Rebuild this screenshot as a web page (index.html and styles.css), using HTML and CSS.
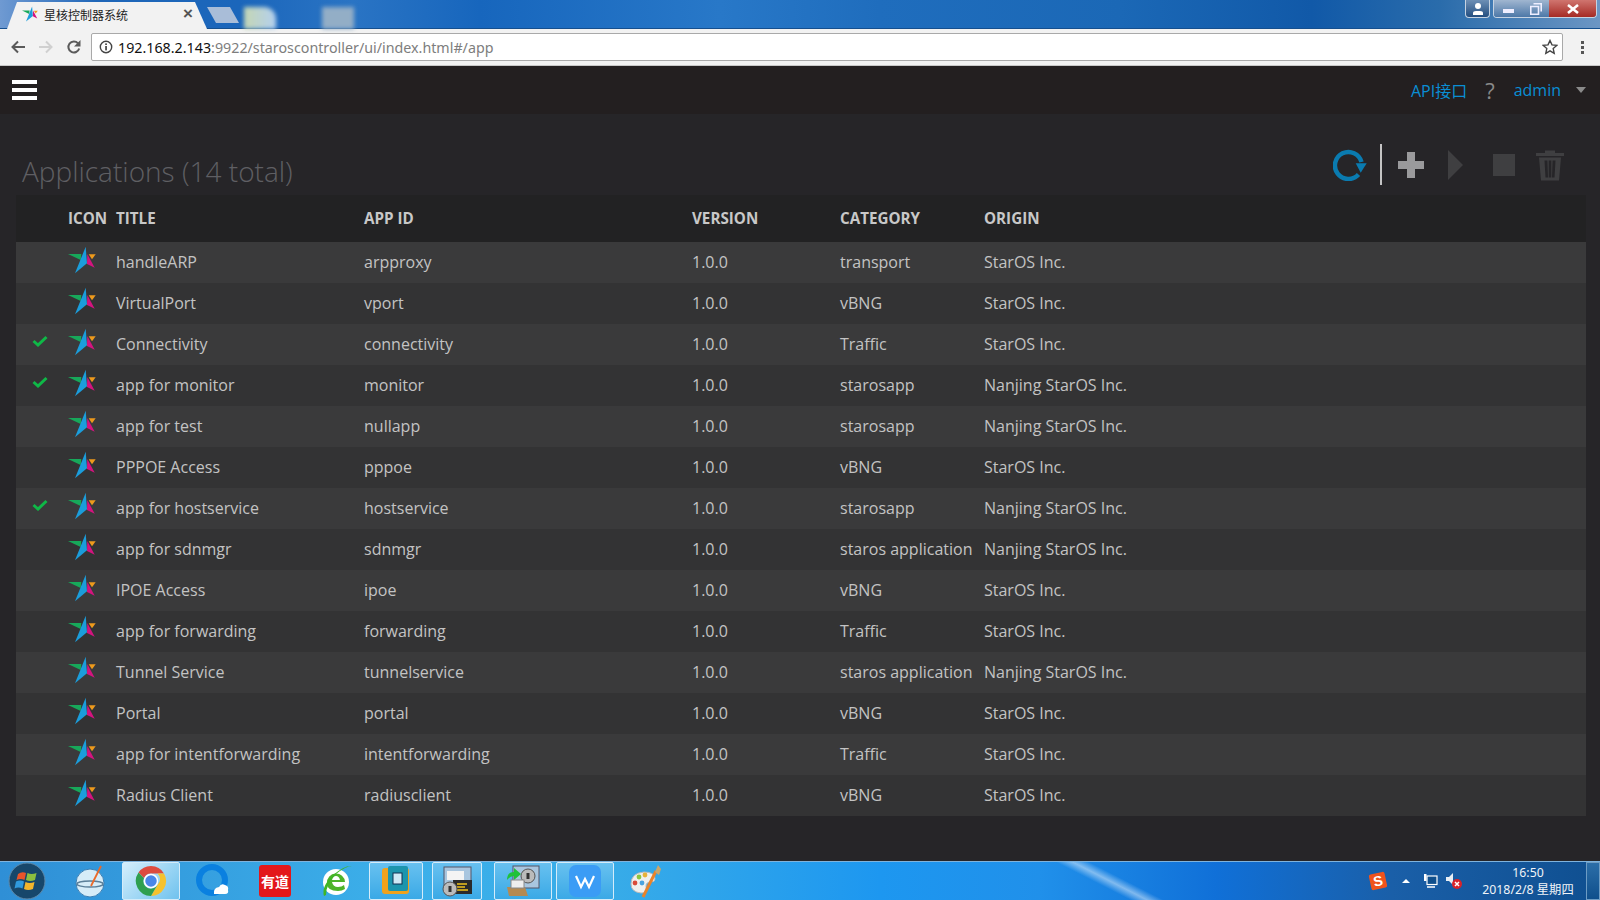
FILE: index.html
```html
<!DOCTYPE html>
<html lang="zh">
<head>
<meta charset="utf-8">
<title>星核控制器系统</title>
<link rel="stylesheet" href="styles.css">
</head>
<body>
<svg class="defs" width="0" height="0">
  <defs>
    <symbol id="star" viewBox="0 0 28 28">
      <polygon points="0,8 13.300,8 12.700,14" fill="#17a85a"/>
      <polygon points="17.700,0.700 19,17.300 7,27.300" fill="#1b9ddb"/>
      <polygon points="19.300,8 26.700,21.700 19,18" fill="#d3137f"/>
      <polygon points="20.700,8.300 27.700,8.300 24,13.300" fill="#ee9a1c"/>
    </symbol>
    <symbol id="check" viewBox="0 0 16 12">
      <path d="M1.500 6 L6 10 L14.500 2" fill="none" stroke="#0fb847" stroke-width="3"/>
    </symbol>
  </defs>
</svg>

<div class="titlebar">
  <div class="tab">
    <svg class="tab-star"><use href="#star"/></svg>
    <span class="tab-title">星核控制器系统</span>
    <span class="tab-close">×</span>
  </div>
  <div class="newtab"></div>
  <div class="blur blur-a"></div>
  <div class="blur blur-b"></div>
  <div class="winbtns">
    <div class="winbtn win-user">
      <svg width="14" height="14" viewBox="0 0 14 14"><circle cx="7" cy="4" r="3" fill="#fff"/><path d="M2 13v-2q0-2 3-2h4q3 0 3 2v2z" fill="#fff"/></svg>
    </div>
    <div class="wingroup">
      <div class="winbtn-min"><span class="min-bar"></span></div>
      <div class="winbtn-max">
        <svg width="12" height="12" viewBox="0 0 12 12"><path d="M3.500.8h7.700v7.700M.8 3.500h7.700v7.700H.8z" fill="none" stroke="#eef" stroke-width="1.600"/></svg>
      </div>
      <div class="winbtn-close">
        <svg width="14" height="10" viewBox="0 0 14 10"><path d="M2 1l10 8M12 1L2 9" stroke="#fff" stroke-width="2.600"/></svg>
      </div>
    </div>
  </div>
</div>

<div class="toolbar">
  <svg class="nav-icon" viewBox="0 0 16 16"><path d="M15 8H3M8 2.500L2.500 8 8 13.500" fill="none" stroke="#5a5a5a" stroke-width="2"/></svg>
  <svg class="nav-icon" viewBox="0 0 16 16"><path d="M1 8h12M8 2.500L13.500 8 8 13.500" fill="none" stroke="#d0d0d0" stroke-width="2"/></svg>
  <svg class="nav-icon" viewBox="0 0 16 16"><path d="M13.200 9.500A5.500 5.500 0 1 1 12 4.300" fill="none" stroke="#5a5a5a" stroke-width="2"/><path d="M14.500 1v6.500H8z" fill="#5a5a5a"/></svg>
  <div class="omnibox">
    <svg class="info" viewBox="0 0 14 14"><circle cx="7" cy="7" r="5.700" fill="none" stroke="#444" stroke-width="1.400"/><rect x="6.200" y="6" width="1.700" height="4.400" fill="#444"/><rect x="6.200" y="3.400" width="1.700" height="1.600" fill="#444"/></svg>
    <span class="url"><span class="url-host">192.168.2.143</span>:9922/staroscontroller/ui/index.html#/app</span>
    <svg class="bookmark" viewBox="0 0 16 16"><path d="M8 1.500l2 4.400 4.800.5-3.600 3.200 1 4.700L8 11.900l-4.200 2.400 1-4.700L1.200 6.400l4.800-.5z" fill="none" stroke="#444" stroke-width="1.400"/></svg>
  </div>
  <div class="kebab"><i></i><i></i><i></i></div>
</div>

<header class="navbar">
  <div class="burger"><i></i><i></i><i></i></div>
  <nav class="usernav">
    <a class="api">API接口</a>
    <span class="help">?</span>
    <a class="user">admin</a>
    <span class="caret"></span>
  </nav>
</header>

<main class="content">
  <div class="titlerow">
    <h1 class="pagetitle">Applications (14 total)</h1>
    <div class="actions">
      <svg class="act act-refresh" viewBox="0 0 34 32"><path d="M28.500 13A13.500 13.500 0 1 0 25.500 25.500" fill="none" stroke="#0a7bb0" stroke-width="4.500"/><path d="M22.700 14.300h11l-6 9.400z" fill="#0a7bb0"/></svg>
      <span class="divider"></span>
      <svg class="act act-plus" viewBox="0 0 26 26"><path d="M9 0h8v9h9v8h-9v9H9v-9H0V9h9z" fill="#9a9a9c"/></svg>
      <svg class="act act-play" viewBox="0 0 15 30"><path d="M0 0l15 15L0 30z" fill="#3f3f41"/></svg>
      <span class="act-stop"></span>
      <svg class="act act-trash" viewBox="0 0 28 32"><path d="M0 4h28v3H0zM9 1.500h10V4H9z" fill="#3f3f41"/><path d="M3 8.500h22l-2 23H5zM8.500 11.500l1 17h2.500l-.6-17zM12.700 11.500v17h2.600v-17zM16.600 11.500l-.6 17h2.500l1-17z" fill="#3f3f41" fill-rule="evenodd"/></svg>
    </div>
  </div>

  <table class="apps">
    <colgroup>
      <col class="c-check"><col class="c-icon"><col class="c-title"><col class="c-id"><col class="c-ver"><col class="c-cat"><col>
    </colgroup>
    <thead>
      <tr><th></th><th>ICON</th><th>TITLE</th><th>APP ID</th><th>VERSION</th><th>CATEGORY</th><th>ORIGIN</th></tr>
    </thead>
    <tbody>
      <tr><td></td><td><svg class="star"><use href="#star"/></svg></td><td>handleARP</td><td>arpproxy</td><td>1.0.0</td><td>transport</td><td>StarOS Inc.</td></tr>
      <tr><td></td><td><svg class="star"><use href="#star"/></svg></td><td>VirtualPort</td><td>vport</td><td>1.0.0</td><td>vBNG</td><td>StarOS Inc.</td></tr>
      <tr><td><svg class="check"><use href="#check"/></svg></td><td><svg class="star"><use href="#star"/></svg></td><td>Connectivity</td><td>connectivity</td><td>1.0.0</td><td>Traffic</td><td>StarOS Inc.</td></tr>
      <tr><td><svg class="check"><use href="#check"/></svg></td><td><svg class="star"><use href="#star"/></svg></td><td>app for monitor</td><td>monitor</td><td>1.0.0</td><td>starosapp</td><td>Nanjing StarOS Inc.</td></tr>
      <tr><td></td><td><svg class="star"><use href="#star"/></svg></td><td>app for test</td><td>nullapp</td><td>1.0.0</td><td>starosapp</td><td>Nanjing StarOS Inc.</td></tr>
      <tr><td></td><td><svg class="star"><use href="#star"/></svg></td><td>PPPOE Access</td><td>pppoe</td><td>1.0.0</td><td>vBNG</td><td>StarOS Inc.</td></tr>
      <tr><td><svg class="check"><use href="#check"/></svg></td><td><svg class="star"><use href="#star"/></svg></td><td>app for hostservice</td><td>hostservice</td><td>1.0.0</td><td>starosapp</td><td>Nanjing StarOS Inc.</td></tr>
      <tr><td></td><td><svg class="star"><use href="#star"/></svg></td><td>app for sdnmgr</td><td>sdnmgr</td><td>1.0.0</td><td>staros application</td><td>Nanjing StarOS Inc.</td></tr>
      <tr><td></td><td><svg class="star"><use href="#star"/></svg></td><td>IPOE Access</td><td>ipoe</td><td>1.0.0</td><td>vBNG</td><td>StarOS Inc.</td></tr>
      <tr><td></td><td><svg class="star"><use href="#star"/></svg></td><td>app for forwarding</td><td>forwarding</td><td>1.0.0</td><td>Traffic</td><td>StarOS Inc.</td></tr>
      <tr><td></td><td><svg class="star"><use href="#star"/></svg></td><td>Tunnel Service</td><td>tunnelservice</td><td>1.0.0</td><td>staros application</td><td>Nanjing StarOS Inc.</td></tr>
      <tr><td></td><td><svg class="star"><use href="#star"/></svg></td><td>Portal</td><td>portal</td><td>1.0.0</td><td>vBNG</td><td>StarOS Inc.</td></tr>
      <tr><td></td><td><svg class="star"><use href="#star"/></svg></td><td>app for intentforwarding</td><td>intentforwarding</td><td>1.0.0</td><td>Traffic</td><td>StarOS Inc.</td></tr>
      <tr><td></td><td><svg class="star"><use href="#star"/></svg></td><td>Radius Client</td><td>radiusclient</td><td>1.0.0</td><td>vBNG</td><td>StarOS Inc.</td></tr>
    </tbody>
  </table>
</main>

<footer class="taskbar">
  <div class="tb-start">
    <svg width="38" height="38" viewBox="0 0 38 38">
      <circle cx="19" cy="19" r="18" fill="#17476b" stroke="#5d88a8"/>
      <path d="M10 12q4-3 8-1l-1.500 7q-4-2-8 0z" fill="#e8542a"/>
      <path d="M19.500 11q4 2 9 0l-1.500 7q-5 2-9 0z" fill="#8cbf3f"/>
      <path d="M8 19.500q4-2 8 0l-1.500 7q-4-2-8 0z" fill="#2f9ade"/>
      <path d="M17.500 20q4 2 9 0l-1.500 7q-5 2-9 0z" fill="#f2b52c"/>
    </svg>
  </div>
  <div class="tb-item tb-w62">
    <svg width="32" height="38" viewBox="0 0 32 38">
      <circle cx="15" cy="21" r="14" fill="#d6ecf8" stroke="#3a7fb5"/>
      <ellipse cx="15" cy="22" rx="13" ry="3" fill="none" stroke="#5b7f99" stroke-width="1.500"/>
      <path d="M16 24L26 4" stroke="#ea6a2a" stroke-width="1.800"/>
    </svg>
  </div>
  <div class="tb-item tb-active">
    <svg width="32" height="32" viewBox="0 0 32 32">
      <path d="M16 1a15 15 0 0 1 13 7.500H16a7.500 7.500 0 0 0-7 4.800L3.500 7.500A15 15 0 0 1 16 1z" fill="#dd4b3e"/>
      <path d="M29 8.500A15 15 0 0 1 16 31l6.500-11.200A7.500 7.500 0 0 0 22.500 8.500z" fill="#f5c22e"/>
      <path d="M3.500 7.500A15 15 0 0 0 16 31l6.500-11.200a7.500 7.500 0 0 1-13.500-6.500z" fill="#2f9f4f"/>
      <circle cx="16" cy="16" r="6.500" fill="#4a86e8" stroke="#fff" stroke-width="1.500"/>
    </svg>
  </div>
  <div class="tb-item tb-w62 tb-qq">
    <svg width="34" height="36" viewBox="0 0 34 36">
      <circle cx="16" cy="17" r="13" fill="none" stroke="#0a80e0" stroke-width="6"/>
      <path d="M18 31q-1-6 5-7 2-4 6-2 4 1 3 5 1 4-3 4z" fill="#fff"/>
    </svg>
  </div>
  <div class="tb-item tb-w62"><span class="youdao">有道</span></div>
  <div class="tb-item tb-w62">
    <svg width="32" height="36" viewBox="0 0 32 36">
      <circle cx="15" cy="19" r="13" fill="#fff"/>
      <path d="M6 20a9 9 0 1 1 18-1H11q1 5 6 5 4 0 6-2l1 4q-3 2-7 2-11 0-11-8zm5-3h8q-1-4-4-4t-4 4z" fill="#4db32a"/>
      <path d="M3 33Q0 24 12 12 24 2 31 3q-6 0-16 8Q5 21 5 32z" fill="#3fb526"/>
    </svg>
  </div>
  <div class="tb-item tb-open tb-a">
    <svg width="32" height="32" viewBox="0 0 32 32">
      <rect x="2" y="3" width="27" height="26" rx="3" fill="#f0a21c"/>
      <rect x="8" y="1" width="20" height="25" rx="2" fill="#1c95ad"/>
      <rect x="13" y="8" width="9" height="11" fill="#cfe9f5" stroke="#135" stroke-width="1"/>
    </svg>
  </div>
  <div class="tb-item tb-open tb-b">
    <svg width="32" height="32" viewBox="0 0 32 32">
      <rect x="3" y="2" width="27" height="22" fill="#a9c6df" stroke="#556"/>
      <rect x="6" y="6" width="17" height="9" fill="#f4f4f4"/>
      <rect x="12" y="15" width="19" height="14" fill="#2a2a2a"/>
      <path d="M16 19h10M16 22h8M16 25h11" stroke="#f2c31c" stroke-width="1.400"/>
      <circle cx="9" cy="24" r="7" fill="#bbb" stroke="#555"/>
      <rect x="7.500" y="21" width="3" height="6" fill="#333"/>
    </svg>
  </div>
  <div class="tb-item tb-open tb-c">
    <svg width="34" height="34" viewBox="0 0 34 34">
      <rect x="7" y="2" width="26" height="22" fill="#a9c6df" stroke="#556"/>
      <circle cx="22" cy="12" r="7" fill="#bbb" stroke="#555"/>
      <rect x="20.500" y="9" width="3" height="6" fill="#333"/>
      <path d="M1 16q0-8 7-8V4l7 6-7 6v-4q-4 0-7 4z" fill="#1fc23a"/>
      <path d="M1 23h18l3 9H3z" fill="#b58a52"/>
      <rect x="5" y="16" width="13" height="8" fill="#eee" stroke="#888"/>
    </svg>
  </div>
  <div class="tb-item tb-open tb-d">
    <svg width="32" height="32" viewBox="0 0 32 32">
      <rect width="32" height="32" rx="7" fill="#3b9cf5"/>
      <path d="M7 11l5 11 4-8 4 8 5-11" fill="none" stroke="#fff" stroke-width="2.200"/>
    </svg>
  </div>
  <div class="tb-item tb-paint">
    <svg width="34" height="34" viewBox="0 0 34 34">
      <path d="M2 20q0-11 13-12 11 0 11 7 0 3-4 3-5 0-5 4 0 3 1 5-1 2-6 2-10-1-10-9z" fill="#f0f0ee" stroke="#bbb"/>
      <circle cx="6" cy="19" r="2.400" fill="#d94b3a"/>
      <circle cx="10" cy="13" r="2.400" fill="#8cc63f"/>
      <circle cx="16" cy="11" r="2.400" fill="#e8b23a"/>
      <circle cx="13" cy="19" r="2.400" fill="#4aa3df"/>
      <path d="M14 33L27 7" stroke="#e8832a" stroke-width="3"/>
      <path d="M26 8l3-7 3 4-2 6z" fill="#c9a66b"/>
    </svg>
  </div>
  <div class="tray">
    <span class="sogou">S</span>
    <span class="tray-up"></span>
    <svg class="tray-ic" width="16" height="16" viewBox="0 0 16 16">
      <rect x="5" y="3" width="10" height="8.500" fill="#0f4f8c" stroke="#fff" stroke-width="1.200"/>
      <path d="M5 14h8" stroke="#fff" stroke-width="1.500"/>
      <rect x="2" y="1" width="2.500" height="7" fill="#fff"/>
    </svg>
    <svg class="tray-ic tray-sound" width="18" height="18" viewBox="0 0 18 18">
      <path d="M1 5h3l4-4v12l-4-4H1z" fill="#e8eef4"/>
      <circle cx="12" cy="12" r="5" fill="#d8232a"/>
      <path d="M10 10l4 4M14 10l-4 4" stroke="#fff" stroke-width="1.500"/>
    </svg>
    <div class="clock"><span>16:50</span><span>2018/2/8 星期四</span></div>
    <div class="showdesk"></div>
  </div>
</footer>
</body>
</html>
```

FILE: styles.css
```css
* { box-sizing: border-box; }
html, body { margin: 0; padding: 0; }
body {
  width: 1600px;
  height: 900px;
  overflow: hidden;
  display: flex;
  flex-direction: column;
  background: #262528;
  font-family: "Open Sans", "Noto Sans CJK SC", sans-serif;
}
.defs { position: absolute; }

/* window title bar */
.titlebar {
  height: 29px;
  flex: none;
  display: flex;
  align-items: flex-end;
  padding-left: 7px;
  background: linear-gradient(90deg, #6f9ad2 0, #1f66b8 6%, #1b66bb 15%, #2a74c4 22%, #1766bd 30%, #2878c8 45%, #1f6dbd 55%, #1b68b6 70%, #1159a8 82%, #2a6cab 90%, #6c96c4 100%);
  box-shadow: inset 0 -1px 0 #154f8e;
}
.tab {
  width: 200px;
  height: 27px;
  display: flex;
  align-items: center;
  padding: 0 14px 3px 15px;
  background: #f2f2f2;
  clip-path: polygon(0 100%, 10px 0, 188px 0, 200px 100%);
}
.tab-star { width: 16px; height: 16px; flex: none; }
.tab-title {
  margin-left: 6px;
  font: 12px "Noto Sans CJK SC", sans-serif;
  color: #222;
  flex: 1;
}
.tab-close { font: bold 17px "Liberation Sans", sans-serif; color: #555; }
.newtab {
  width: 32px;
  height: 16px;
  margin-bottom: 6px;
  background: #a9bdd8;
  clip-path: polygon(0 0, 23px 0, 32px 100%, 9px 100%);
}
.blur { height: 22px; filter: blur(2px); }
.blur-a { width: 32px; margin-left: 5px; background: linear-gradient(90deg, #c4d6b4, #b4d0ee); border-radius: 0 12px 0 0; }
.blur-b { width: 32px; margin-left: 46px; background: #93aec6; }
.winbtns {
  margin-left: auto;
  margin-right: 3px;
  align-self: flex-start;
  display: flex;
  gap: 3px;
}
.winbtn, .wingroup {
  height: 18px;
  border: 1px solid #c6d3e2;
  border-top: none;
  border-radius: 0 0 4px 4px;
  display: flex;
  align-items: center;
  justify-content: center;
  overflow: hidden;
}
.win-user { width: 25px; background: linear-gradient(#6d8fb5, #234e80); }
.winbtn-min, .winbtn-max { width: 29px; height: 100%; display: flex; align-items: center; justify-content: center; background: linear-gradient(#a0b6d0, #4d78a8); }
.winbtn-max { width: 26px; }
.winbtn-close { width: 47px; height: 100%; display: flex; align-items: center; justify-content: center; background: linear-gradient(#d0756f, #a52a24); }
.min-bar { display: block; width: 11px; height: 4px; margin-top: 4px; background: #eef; }

/* browser toolbar */
.toolbar {
  height: 37px;
  flex: none;
  display: flex;
  align-items: center;
  padding-left: 10px;
  gap: 12px;
  background: #f2f2f2;
  border-bottom: 1px solid #c8c8c8;
}
.nav-icon { width: 16px; height: 16px; flex: none; }
.omnibox {
  width: 1472px;
  height: 28px;
  margin-left: -3px;
  display: flex;
  align-items: center;
  padding: 0 4px 0 7px;
  background: #fff;
  border: 1px solid #a9a9a9;
  border-radius: 2px;
}
.info { width: 14px; height: 14px; flex: none; }
.url {
  margin-left: 5px;
  flex: 1;
  font: 14.270px "Noto Sans", sans-serif;
  color: #7d7d7d;
  white-space: nowrap;
}
.url-host { color: #111; }
.bookmark { width: 16px; height: 16px; flex: none; }
.kebab { display: flex; flex-direction: column; gap: 2px; margin-left: 6px; }
.kebab i { display: block; width: 3px; height: 3px; background: #555; }

/* app navbar */
.navbar {
  height: 48px;
  flex: none;
  display: flex;
  align-items: center;
  justify-content: space-between;
  padding: 0 14px 0 12px;
  background: #231f20;
}
.burger { display: flex; flex-direction: column; gap: 4px; }
.burger i { display: block; width: 25px; height: 4px; background: #fff; }
.usernav { display: flex; align-items: center; }
.api, .user { font-size: 16px; color: #0a8ed4; }
.help { margin-left: 18px; font-size: 22px; line-height: 1; color: #8a8a8a; }
.user { margin-left: 19px; }
.caret {
  margin-left: 15px;
  width: 0;
  height: 0;
  border: 5px solid transparent;
  border-top: 6px solid #8a8a8a;
  border-bottom: none;
}

/* content */
.content { flex: 1; padding: 0 14px 0 16px; }
.titlerow {
  height: 81px;
  display: flex;
  justify-content: space-between;
  align-items: flex-start;
}
.pagetitle {
  margin: 38px 0 0 6px;
  font-size: 28px;
  line-height: 38px;
  font-weight: 300;
  color: #5f5f63;
}
.actions { display: flex; align-items: center; padding-top: 30px; padding-right: 22px; }
.act { display: block; flex: none; }
.act-refresh { width: 34px; height: 32px; }
.divider { width: 2px; height: 41px; margin-left: 13px; background: #c4c4c4; }
.act-plus { width: 26px; height: 26px; margin-left: 16px; }
.act-play { width: 15px; height: 30px; margin-left: 24px; }
.act-stop { width: 22px; height: 22px; margin-left: 30px; background: #3f3f41; }
.act-trash { width: 28px; height: 32px; margin-left: 21px; }

.apps {
  width: 1570px;
  table-layout: fixed;
  border-collapse: collapse;
  font-size: 16px;
  color: #c3c3c3;
}
.c-check { width: 52px; }
.c-icon { width: 48px; }
.c-title { width: 248px; }
.c-id { width: 328px; }
.c-ver { width: 148px; }
.c-cat { width: 144px; }
.apps th {
  height: 47px;
  padding: 0 0 1px;
  text-align: left;
  font-weight: 700;
  font-size: 15.200px;
  color: #c8c8c8;
  background: #222223;
}
.apps td { height: 41px; padding: 0 0 2px; vertical-align: middle; white-space: nowrap; }
.apps tbody tr:nth-child(odd) { background: #3a3a3b; }
.apps tbody tr:nth-child(even) { background: #333334; }
.star { display: block; width: 28px; height: 28px; margin-bottom: 4px; }
.check { display: block; width: 16px; height: 12px; margin: 0 0 6px 16px; }

/* taskbar */
.taskbar {
  height: 39px;
  flex: none;
  display: flex;
  align-items: center;
  padding-left: 8px;
  background:
    linear-gradient(27deg, transparent 67.500%, rgba(255, 255, 255, .45) 68.500%, transparent 69.500%),
    linear-gradient(90deg, #2f8fd6 0, #3cb0ea 25%, #38ace8 38%, #1d97f0 55%, #2090ea 65%, #1070d8 76%, #1a5fa8 87%, #0f4f90 100%);
  border-top: 1px solid #7fb3dd;
}
.tb-start { width: 52px; height: 38px; display: flex; align-items: center; }
.tb-item { height: 38px; display: flex; align-items: center; justify-content: center; flex: none; }
.tb-w62 { width: 62px; }
.tb-qq { margin-left: 2px; }
.tb-active, .tb-open {
  border: 1px solid #d4ecfa;
  border-radius: 2px;
}
.tb-active { background: linear-gradient(135deg, #d4eefc, #6fc2ee); width: 58px; }
.tb-open { background: linear-gradient(#68c1f0, #3aa9e6); }
.tb-a { width: 54px; margin-left: 1px; }
.tb-b { width: 50px; margin-left: 9px; }
.tb-c { width: 58px; margin-left: 12px; }
.tb-d { width: 58px; margin-left: 4px; }
.tb-paint { width: 62px; margin-left: 1px; }
.youdao {
  width: 32px;
  height: 32px;
  border-radius: 3px;
  background: #e3171b;
  color: #fff;
  font: bold 14px/32px "Noto Sans CJK SC", sans-serif;
  text-align: center;
  white-space: nowrap;
}
.tray { margin-left: auto; display: flex; align-items: center; height: 100%; }
.sogou {
  width: 16px;
  height: 16px;
  border-radius: 2px;
  background: #f0531c;
  color: #fff;
  font: bold 14px/16px "Liberation Sans", sans-serif;
  text-align: center;
  transform: rotate(-12deg);
}
.tray-up {
  margin-left: 16px;
  width: 0;
  height: 0;
  border: 4px solid transparent;
  border-bottom: 4px solid #fff;
  border-top: none;
}
.tray-ic { margin-left: 12px; }
.tray-sound { margin-left: 7px; }
.clock {
  width: 104px;
  margin-left: 13px;
  display: flex;
  flex-direction: column;
  align-items: center;
  font: 12.300px/17px "Noto Sans", "Noto Sans CJK SC", sans-serif;
  color: #f0f4f8;
}
.showdesk {
  width: 14px;
  height: 100%;
  margin-left: 6px;
  background: linear-gradient(#2c6ea8, #0f4f8c);
  border: 1px solid #6d9cc4;
}
```
